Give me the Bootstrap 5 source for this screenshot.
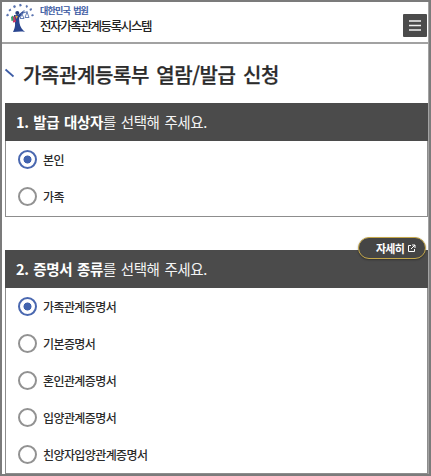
<!DOCTYPE html>
<html lang="ko">
<head>
<meta charset="utf-8">
<meta name="viewport" content="width=device-width, initial-scale=1">
<title>전자가족관계등록시스템</title>
<link rel="stylesheet" href="https://cdn.jsdelivr.net/npm/bootstrap@5.3.0/dist/css/bootstrap.min.css">
<style>
body{font-family:"Noto Sans CJK KR",sans-serif;color:#2b2b2b;background:#fff}
.frame{width:431px;height:476px;border:2px solid #7b7b7b;white-space:nowrap}
.screen{height:472px;border-right:1px solid #a3a3a3}
.topbar{height:42px;border-bottom:2px solid #a2a2a2;padding:0 1px 0 3px}
.emblem{width:34px;height:34px}
.brand-text{padding:3px 0 0 1px}
.brand-top{font-size:9px;line-height:11px;color:#3555a0;font-weight:500;letter-spacing:-.8px;word-spacing:1.5px;-webkit-text-stroke:.2px #3555a0}
.brand-name{font-size:12.5px;line-height:19px;font-weight:500;color:#222;letter-spacing:-1.4px}
.menu-btn{width:24px;height:23px;background:#4b4b4b;border-radius:1px;margin-top:12px}
.page-title{height:59px;padding-left:2px}
.page-title h1{font-size:20px;line-height:30px;font-weight:500;letter-spacing:-.42px;word-spacing:2.2px;color:#2b2b2b;padding:2px 0 0 8px;-webkit-text-stroke:.25px #2b2b2b}
.panel{margin:0 0 0 3px;width:423px;border:1px solid #8d8d8d;border-top:0}
.panel-a{height:114px}
.panel-b{height:224px;margin-top:33px}
.band{height:38px;margin:0 -1px;padding-left:11px;background:#4b4b4b;color:#f4f4f4;font-size:14.5px;font-weight:400;letter-spacing:-.4px;word-spacing:1.2px}
.band b{font-weight:700;color:#fff}
.choice{height:37.1px;padding-left:12px;gap:6px;font-size:12px;font-weight:500;letter-spacing:-.6px}
.choice input{width:19px;height:19px;margin:0;border:2px solid #929292;background-color:#fff}
.choice input:checked{border-color:#4a68b0;background-color:#fff;background-image:radial-gradient(circle,#4263ae 3.7px,transparent 4.3px);background-origin:border-box}
.detail{top:-13px;right:1px;width:68px;height:22px;background:#454545;border:1px solid #c5a84b;color:#fff;font-size:11px;font-weight:700;letter-spacing:-.8px;line-height:1;gap:3px;padding-left:8px;box-shadow:0 1px 2px #0005}
</style>
</head>
<body class="overflow-hidden">
<div class="frame overflow-hidden"><div class="screen">
<header class="topbar d-flex justify-content-between align-items-start">
  <a class="d-flex text-decoration-none" href="#">
    <svg class="emblem" viewBox="5 2 34 34">
      <g fill="#5b74b0"><path d="M6 15l2-1.500 1 2-2 1zM8.500 10l2-1.500 .8 2-2 1zM13 6l2-1 1 2-2 1.300zM19 4.500l2-.7 .8 2-2 1zM25.500 6l1.500-1.300 1 2-1.500 1.300zM29.500 9l2-1 .5 2-2 1zM31 15l2-1 1 1.500-2 1z"/></g>
      <circle cx="17.300" cy="13" r="2" fill="#263d7c"/>
      <path d="M14 15h4l5-4 1 1-5 6 .5 5c.5 4 3 7 5.500 9-4-1-8 0-12 0 2-4 3-8 1-13z" fill="#29458f"/>
      <path d="M12.500 16l2.500 1 1 5-3 .5z" fill="#c93562"/><path d="M11 17l2-1.500 .5 5-2 .5z" fill="#35a36b"/><path d="M15 15.500l3 .5-1.500 3z" fill="#e3a13c"/>
      <path d="M20.500 14l7-2.500M24 10v3M22 14l-2 4.500h4zM27 12l-2 5.500h4z" fill="none" stroke="#5873af" stroke-width=".9"/>
    </svg>
    <span class="brand-text d-flex flex-column"><span class="brand-top">대한민국 법원</span><span class="brand-name">전자가족관계등록시스템</span></span>
  </a>
  <button class="menu-btn btn p-0 border-0 d-flex align-items-center justify-content-center" aria-label="메뉴"><svg width="14" height="13" viewBox="0 0 14 13"><path d="M1 2h12M1 6.500h12M1 11h12" stroke="#f2f2f2" stroke-width="1.600"/></svg></button>
</header>
<div class="page-title d-flex align-items-center">
  <svg width="11" height="11" viewBox="0 0 11 11"><path d="M1.500 1.500l8 7" stroke="#3d5ca6" stroke-width="1.700"/></svg>
  <h1 class="m-0">가족관계등록부 열람/발급 신청</h1>
</div>
<section class="panel panel-a">
  <div class="band d-flex align-items-center"><span><b>1. 발급 대상자</b>를 선택해 주세요.</span></div>
  <label class="choice d-flex align-items-center"><input class="form-check-input shadow-none" type="radio" name="target" checked>본인</label>
  <label class="choice d-flex align-items-center"><input class="form-check-input shadow-none" type="radio" name="target">가족</label>
</section>
<section class="panel panel-b position-relative">
  <button class="detail btn rounded-pill position-absolute d-flex align-items-center justify-content-center py-0 pe-0">자세히<svg width="9" height="9" viewBox="0 0 9 9"><path d="M4 1.500H1.500v6h6V5M5 1h3v3M8 1L4 5" fill="none" stroke="#fff"/></svg></button>
  <div class="band d-flex align-items-center"><span><b>2. 증명서 종류</b>를 선택해 주세요.</span></div>
  <label class="choice d-flex align-items-center"><input class="form-check-input shadow-none" type="radio" name="cert" checked>가족관계증명서</label>
  <label class="choice d-flex align-items-center"><input class="form-check-input shadow-none" type="radio" name="cert">기본증명서</label>
  <label class="choice d-flex align-items-center"><input class="form-check-input shadow-none" type="radio" name="cert">혼인관계증명서</label>
  <label class="choice d-flex align-items-center"><input class="form-check-input shadow-none" type="radio" name="cert">입양관계증명서</label>
  <label class="choice d-flex align-items-center"><input class="form-check-input shadow-none" type="radio" name="cert">친양자입양관계증명서</label>
</section>
</div></div>
<script src="https://cdn.jsdelivr.net/npm/bootstrap@5.3.0/dist/js/bootstrap.bundle.min.js"></script>
</body>
</html>
